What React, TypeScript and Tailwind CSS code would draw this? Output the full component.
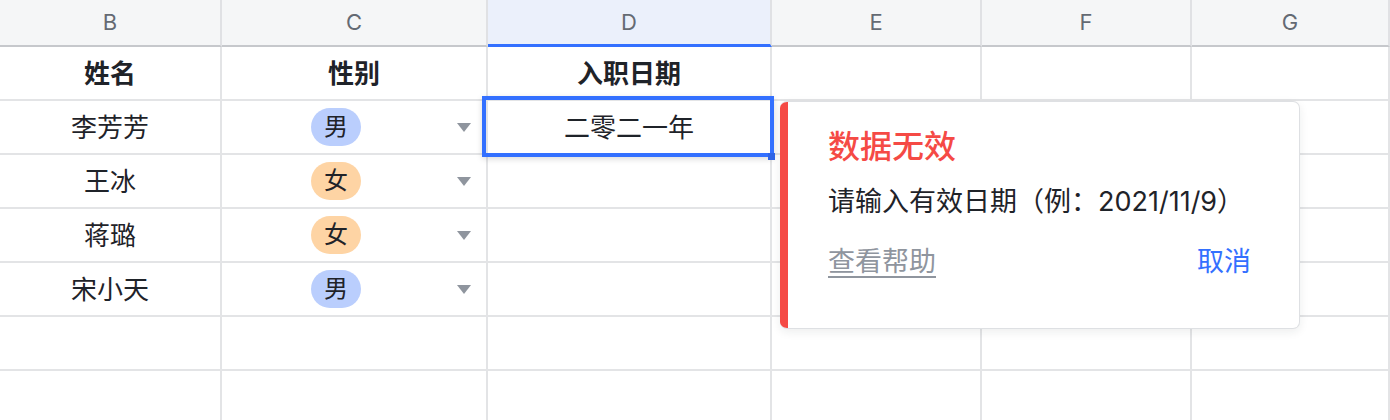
import React from 'react'

const columns = ['B', 'C', 'D', 'E', 'F', 'G']

type Row = { name: string; gender: '男' | '女'; date?: string; selected?: boolean }

const rows: Row[] = [
    { name: '李芳芳', gender: '男', date: '二零二一年', selected: true },
    { name: '王冰', gender: '女' },
    { name: '蒋璐', gender: '女' },
    { name: '宋小天', gender: '男' }
]

const gridCols = 'grid grid-cols-[222px_266px_284px_210px_210px_1fr]'
const cellBase = 'h-[54px] border-r-2 border-b-2 border-[#e3e4e6] flex items-center justify-center'

const Caret = () => (
    <svg width="14" height="9" viewBox="0 0 14 9" className="block">
        <polygon points="0,0 14,0 7,9" fill="#8f959e" />
    </svg>
)

const GenderPill = ({ gender }: { gender: '男' | '女' }) => (
    <span
        className={
            gender === '男'
                ? 'h-[38px] rounded-full bg-[#bacefd] px-[13px] text-[24px] leading-[38px] text-[#1f2329]'
                : 'h-[38px] rounded-full bg-[#fed4a4] px-[13px] text-[24px] leading-[38px] text-[#1f2329]'
        }
    >
        {gender}
    </span>
)

const ErrorPopup = () => (
    <div className="absolute left-[780px] top-[101px] z-20 flex h-[228px] w-[520px] overflow-hidden rounded-[7px] border border-l-0 border-[#dee0e3] bg-white shadow-[0_3px_10px_rgba(31,35,41,0.08)]">
        <div className="w-[8px] shrink-0 bg-[#f54a45]" />
        <div className="flex flex-1 flex-col pl-[40px] pr-[48px] pt-[24px]">
            <div className="text-[32px] leading-[42px] font-medium text-[#f54a45]">数据无效</div>
            <div className="mt-[16px] text-[27px] leading-[36px] text-[#1f2329]">
                请输入有效日期（例：2021/11/9）
            </div>
            <div className="mt-[24px] flex items-center justify-between text-[27px] leading-[36px]">
                <span className="text-[#8f959e] underline decoration-2 underline-offset-[5px]">查看帮助</span>
                <span className="text-[#3370ff]">取消</span>
            </div>
        </div>
    </div>
)

export default function App() {
    return (
        <div className="relative h-[420px] w-[1390px] overflow-hidden bg-white font-['Inter','Noto_Sans_CJK_SC',sans-serif] text-[#1f2329]">
            {/* column header */}
            <div className={gridCols}>
                {columns.map((c) => (
                    <div
                        key={c}
                        className={
                            c === 'D'
                                ? 'flex h-[47px] items-center justify-center border-r-2 border-b-[3px] border-r-[#e0e1e4] border-b-[#3370ff] bg-[#ebf0fb] text-[22px] text-[#646a73]'
                                : 'flex h-[47px] items-center justify-center border-r-2 border-b-2 border-r-[#e0e1e4] border-b-[#c6c8cc] bg-[#f5f6f7] text-[22px] text-[#646a73]'
                        }
                    >
                        {c}
                    </div>
                ))}
            </div>

            {/* title row */}
            <div className={gridCols}>
                <div className={`${cellBase} text-[26px] font-bold`}>姓名</div>
                <div className={`${cellBase} text-[26px] font-bold`}>性别</div>
                <div className={`${cellBase} text-[26px] font-bold`}>入职日期</div>
                <div className={cellBase} />
                <div className={cellBase} />
                <div className={cellBase} />
            </div>

            {rows.map((r) => (
                <div key={r.name} className={gridCols}>
                    <div className={`${cellBase} text-[26px]`}>{r.name}</div>
                    <div className="flex h-[54px] items-center border-r-2 border-b-2 border-[#e3e4e6]">
                        <div className="flex flex-1 justify-center">
                            <GenderPill gender={r.gender} />
                        </div>
                        <div className="w-[36px] pl-[7px]">
                            <Caret />
                        </div>
                    </div>
                    <div className={`${cellBase} relative text-[26px]`}>
                        {r.date}
                        {r.selected && (
                            <>
                                <div className="pointer-events-none absolute -top-[5px] -right-[4px] -bottom-[4px] -left-[6px] z-10 border-[4px] border-[#3370ff] shadow-[0_2px_6px_rgba(0,0,0,0.15)]" />
                                <div className="absolute -right-[5px] -bottom-[7px] z-10 h-[7px] w-[7px] bg-[#2f64e6]" />
                            </>
                        )}
                    </div>
                    <div className={cellBase} />
                    <div className={cellBase} />
                    <div className={cellBase} />
                </div>
            ))}

            {[0, 1, 2].map((i) => (
                <div key={i} className={gridCols}>
                    <div className={cellBase} />
                    <div className={cellBase} />
                    <div className={cellBase} />
                    <div className={cellBase} />
                    <div className={cellBase} />
                    <div className={cellBase} />
                </div>
            ))}

            <ErrorPopup />
        </div>
    )
}
